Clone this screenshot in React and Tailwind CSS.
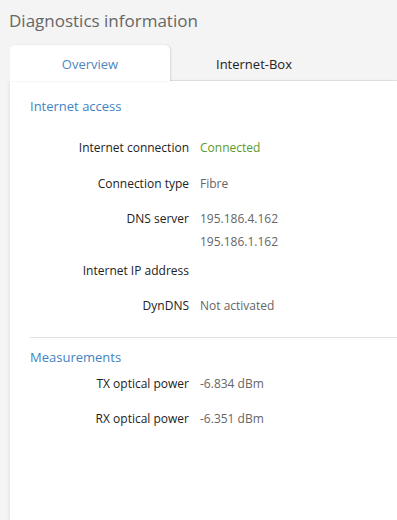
import React from 'react';

const rows = [
  { label: 'Internet connection', values: ['Connected'], green: true, mt: 'mt-[22px]' },
  { label: 'Connection type', values: ['Fibre'], mt: 'mt-[16px]' },
  { label: 'DNS server', values: ['195.186.4.162', '195.186.1.162'], mt: 'mt-[15px]' },
  { label: 'Internet IP address', values: [''], mt: 'mt-[9px]' },
  { label: 'DynDNS', values: ['Not activated'], mt: 'mt-[15px]' },
];

const measurements = [
  { label: 'TX optical power', value: '-6.834 dBm', mt: 'mt-[7px]' },
  { label: 'RX optical power', value: '-6.351 dBm', mt: 'mt-[15px]' },
];

const Row = ({ label, values, green, mt }) => (
  <div className={`flex ${mt}`}>
    <div className="w-[179px] text-right text-[#222]">{label}</div>
    <div className="ml-[11px] flex flex-col gap-[3px]">
      {values.map((v, i) => (
        <div key={i} className={`h-[20px] ${green ? 'text-[#5b9a2c]' : 'text-[#666]'}`}>
          {v}
        </div>
      ))}
    </div>
  </div>
);

export default function App() {
  return (
    <div className="w-[397px] h-[520px] bg-[#f4f4f4] overflow-hidden flex flex-col font-['Open_Sans',sans-serif] text-[12px] leading-[20px]">
      <h1 className="pl-[9px] pt-[9px] text-[17px] leading-[24px] text-[#666]">Diagnostics information</h1>

      <div className="mt-[12px] flex h-[36px] pl-[10px]">
        <div className="w-[160px] pt-[2px] bg-white rounded-t-[5px] shadow-[1px_0_2px_rgba(0,0,0,0.12)] flex items-center justify-center text-[13px] text-[#4f86c0] z-10">
          Overview
        </div>
        <div className="flex-1 flex border-b border-[#e4e4e4]">
          <div className="w-[168px] pt-[2px] flex items-center justify-center text-[13px] text-[#222]">
            Internet-Box
          </div>
        </div>
      </div>

      <div className="ml-[10px] flex-1 bg-white shadow-[-1px_0_3px_rgba(0,0,0,0.08)] pt-[15px]">
        <h2 className="pl-[20px] text-[13px] text-[#3f83c4]">Internet access</h2>
        {rows.map((r) => (
          <Row key={r.label} {...r} />
        ))}

        <div className="mt-[21px] ml-[20px] border-t border-[#e2e2e2]" />

        <h2 className="mt-[9px] pl-[20px] text-[13px] text-[#3f83c4]">Measurements</h2>
        {measurements.map((m) => (
          <Row key={m.label} label={m.label} values={[m.value]} mt={m.mt} />
        ))}
      </div>
    </div>
  );
}
